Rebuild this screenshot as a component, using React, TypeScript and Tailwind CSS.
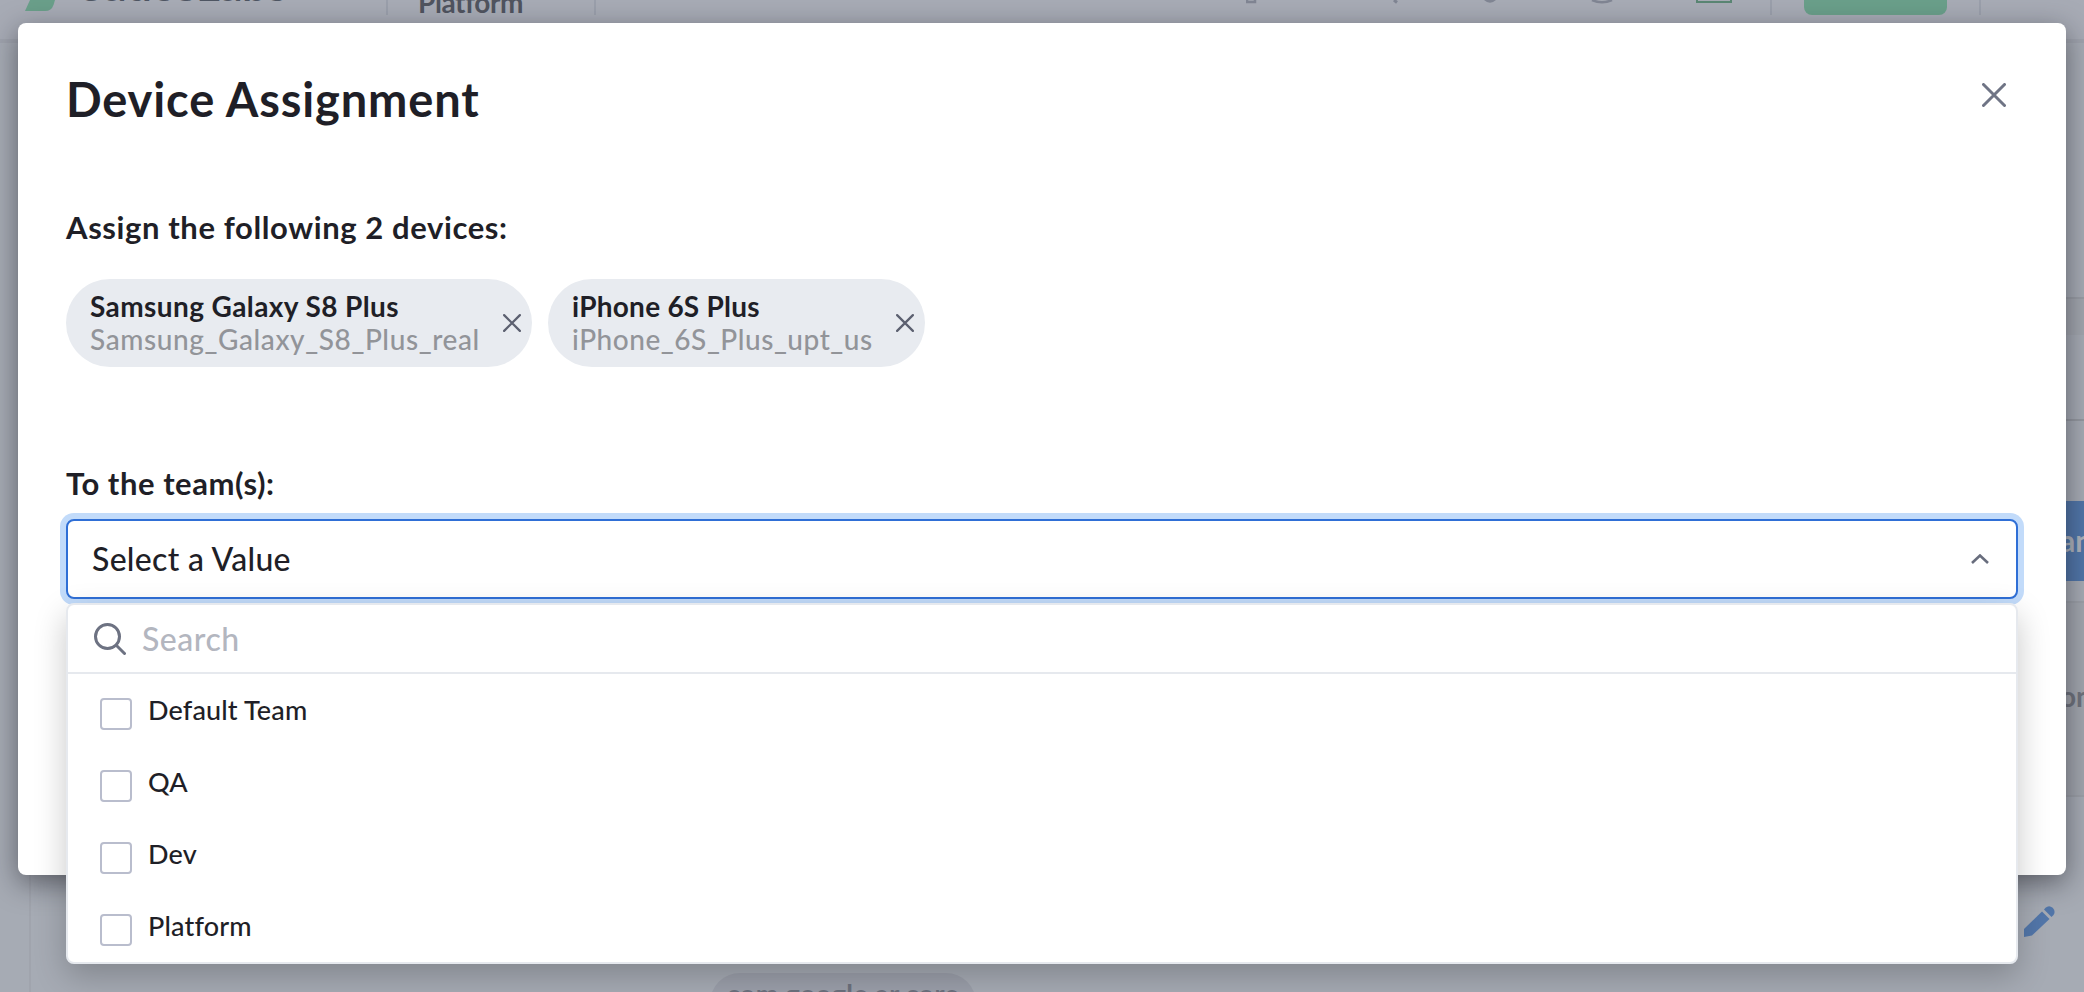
import React from "react";

type Device = { name: string; id: string; nameClass: string; idClass: string };

const devices: Device[] = [
  {
    name: "Samsung Galaxy S8 Plus",
    id: "Samsung_Galaxy_S8_Plus_real",
    nameClass: "tracking-[0.4px]",
    idClass: "tracking-[0.6px]",
  },
  {
    name: "iPhone 6S Plus",
    id: "iPhone_6S_Plus_upt_us",
    nameClass: "tracking-[0.25px]",
    idClass: "tracking-[0.55px]",
  },
];

const teams = ["Default Team", "QA", "Dev", "Platform"];

function Cross({ className }: { className: string }) {
  return (
    <svg viewBox="0 0 24 24" fill="none" stroke="currentColor" strokeLinecap="round" className={className}>
      <path d="M1.5 1.5 22.5 22.5M22.5 1.5 1.5 22.5" />
    </svg>
  );
}

function Chip({ device, className }: { device: Device; className: string }) {
  return (
    <div className={`flex h-[88px] items-center justify-between rounded-full bg-[#e8ebf0] pl-6 pr-[11px] ${className}`}>
      <div className="whitespace-nowrap text-[28px] leading-[33px]">
        <div className={`font-bold text-[#1f1f27] ${device.nameClass}`}>{device.name}</div>
        <div className={`font-medium text-[#929499] ${device.idClass}`}>{device.id}</div>
      </div>
      <button className="text-[#5c6070]">
        <Cross className="block size-[18px] stroke-[3]" />
      </button>
    </div>
  );
}

function Backdrop() {
  return (
    <div className="flex h-full flex-col bg-[#a6abb4]">
      <header className="flex h-[39px] shrink-0 items-start overflow-hidden bg-[#a7abb5]">
        <svg className="ml-[25px] h-[11px] w-[30px] shrink-0" viewBox="0 0 30 11">
          <path d="M5 0H30L28.5 5Q26.500 11 20 11H0Z" fill="#6a9f8a" />
        </svg>
        <div className="ml-[24px] mt-[-44px] w-[307px] shrink-0 whitespace-nowrap text-[46px] font-bold leading-[56px] tracking-[-0.6px] text-[#4f5663]">
          SauceLabs
        </div>
        <div className="h-[15px] w-[2px] shrink-0 bg-[#9a9fab]" />
        <div className="ml-[30px] mt-[-14px] w-[176px] shrink-0 text-[28px] font-bold leading-[33px] tracking-[-0.4px] text-[#50545f]">
          Platform
        </div>
        <div className="h-[15px] w-[2px] shrink-0 bg-[#9a9fab]" />
        <svg className="ml-[650px] h-[4px] w-[486px] shrink-0" viewBox="0 0 486 4" fill="none">
          <path d="M1 0V2H9V0" stroke="#808593" strokeWidth="2.500" />
          <path d="M148 0 151 2.500" stroke="#808593" strokeWidth="3" />
          <path d="M238 0Q244 5.500 250 0Z" fill="#808593" />
          <path d="M346 0Q356 4.500 366 0" stroke="#808593" strokeWidth="2.500" />
          <path d="M451 0V2H485V0" stroke="#5a8673" strokeWidth="2" />
        </svg>
        <div className="ml-[38px] h-[15px] w-[2px] shrink-0 bg-[#9a9fab]" />
        <div className="ml-[32px] h-[15px] w-[143px] shrink-0 rounded-b-[8px] bg-[#6a9f8a]" />
        <div className="ml-[32px] h-[15px] w-[2px] shrink-0 bg-[#9a9fab]" />
      </header>
      <div className="h-[258px] shrink-0 border-t-[4px] border-[#9fa3ad]" />
      <div className="ml-[29px] h-[38px] shrink-0 border-t-2 border-[#999da5] bg-[#a2a6ae]" />
      <div className="ml-[29px] h-[86px] shrink-0 border-b-2 border-[#9498a0]" />
      <div className="flex h-[180px] shrink-0 items-start justify-end pt-[80px]">
        <div className="h-[80px] w-[40px] overflow-hidden bg-[#5075a8] pl-[16px] text-[30px] font-bold leading-[78px] text-[#adb2bb]">
          and
        </div>
      </div>
      <div className="ml-[29px] flex h-[196px] shrink-0 justify-end border-y-2 border-[#9ca0a8] bg-[#a2a6ae]">
        <div className="w-[24px] overflow-hidden text-[28px] font-bold leading-[187px] text-[#6f737d]">on</div>
      </div>
      <div className="flex grow overflow-hidden">
        <div className="ml-[29px] w-[2px] shrink-0 bg-[#a0a4ad]" />
        <div className="ml-[679px] mt-[176px] h-[60px] w-[266px] shrink-0 rounded-full bg-[#9b9faa] text-center text-[27px] font-bold leading-[42px] tracking-[0.4px] text-[#6c717e]">
          com.google.ar.core
        </div>
        <svg className="ml-[1048px] mt-[109px] size-[31px] shrink-0" viewBox="0 0 31 31" fill="#5276a9">
          <path d="M0 31V23L18 5.500 25.500 13 8 29.500Z" />
          <path d="M20 3.500 21.500 1.800Q25 -1.500 28.700 1.800 32 5.500 29.500 9L27.500 11Z" />
        </svg>
      </div>
    </div>
  );
}

function TeamSelect() {
  return (
    <div className="relative mt-4">
      <button className="flex h-[80px] w-full items-center justify-between rounded-[8px] border-2 border-[#2f6fd6] bg-white pl-6 pr-[27px] shadow-[0_0_0_6px_#c2dbfa]">
        <span className="text-[32px] font-medium leading-10 tracking-[0.3px]">Select a Value</span>
        <svg viewBox="0 0 18 10" fill="none" stroke="#686d7d" className="h-[10px] w-[18px]">
          <path d="M1 9 9 1.500 17 9" strokeWidth="2.600" />
        </svg>
      </button>
      <div className="absolute left-0 top-[84px] h-[361px] w-full rounded-[8px] shadow-[0_12px_32px_rgba(0,0,0,0.22)]" />
      <div className="absolute left-0 top-[84px] z-10 h-[361px] w-full overflow-hidden rounded-[8px] border-2 border-[#e6e9ee] bg-white">
        <div className="flex h-[69px] items-center border-b-2 border-[#e6e9ee] pl-[26px]">
          <svg viewBox="0 0 32 32" fill="none" stroke="#6d7282" strokeLinecap="round" className="size-8">
            <circle cx="13.500" cy="13.500" r="12" strokeWidth="3" />
            <path d="M22.500 22.500 30.500 30.500" strokeWidth="3" />
          </svg>
          <span className="ml-[16px] text-[32px] font-medium leading-10 tracking-[0.5px] text-[#b3b6bf]">Search</span>
        </div>
        <ul className="pt-1">
          {teams.map((team) => (
            <li key={team} className="flex h-[72px] items-center pl-[32px]">
              <span className="size-8 rounded-[4px] border-2 border-[#b9bdcd] bg-white" />
              <span className="ml-[16px] pb-[8px] text-[27px] font-medium leading-[34px] tracking-[0.15px]">{team}</span>
            </li>
          ))}
        </ul>
      </div>
    </div>
  );
}

export default function App() {
  return (
    <div className="relative h-[992px] w-full overflow-hidden font-['Lato',sans-serif] text-[#1f1f27]">
      <Backdrop />
      <section
        role="dialog"
        className="absolute left-[18px] top-[23px] h-[852px] w-[2048px] rounded-[8px] bg-white px-12 pt-[48px] shadow-[0_8px_28px_rgba(20,20,28,0.5)]"
      >
        <div className="flex items-start justify-between">
          <h2 className="text-[47px] font-bold leading-[56px] tracking-[0.85px]">Device Assignment</h2>
          <button className="mr-[12px] mt-[12px] text-[#6f7485]">
            <Cross className="block size-6 stroke-[3]" />
          </button>
        </div>
        <h3 className="mt-[80px] text-[31px] font-bold leading-10 tracking-[0.6px]">Assign the following 2 devices:</h3>
        <div className="mt-8 flex gap-4">
          <Chip device={devices[0]} className="w-[466px]" />
          <Chip device={devices[1]} className="w-[377px]" />
        </div>
        <h3 className="mt-24 text-[31px] font-bold leading-10 tracking-[0.55px]">To the team(s):</h3>
        <TeamSelect />
      </section>
    </div>
  );
}
